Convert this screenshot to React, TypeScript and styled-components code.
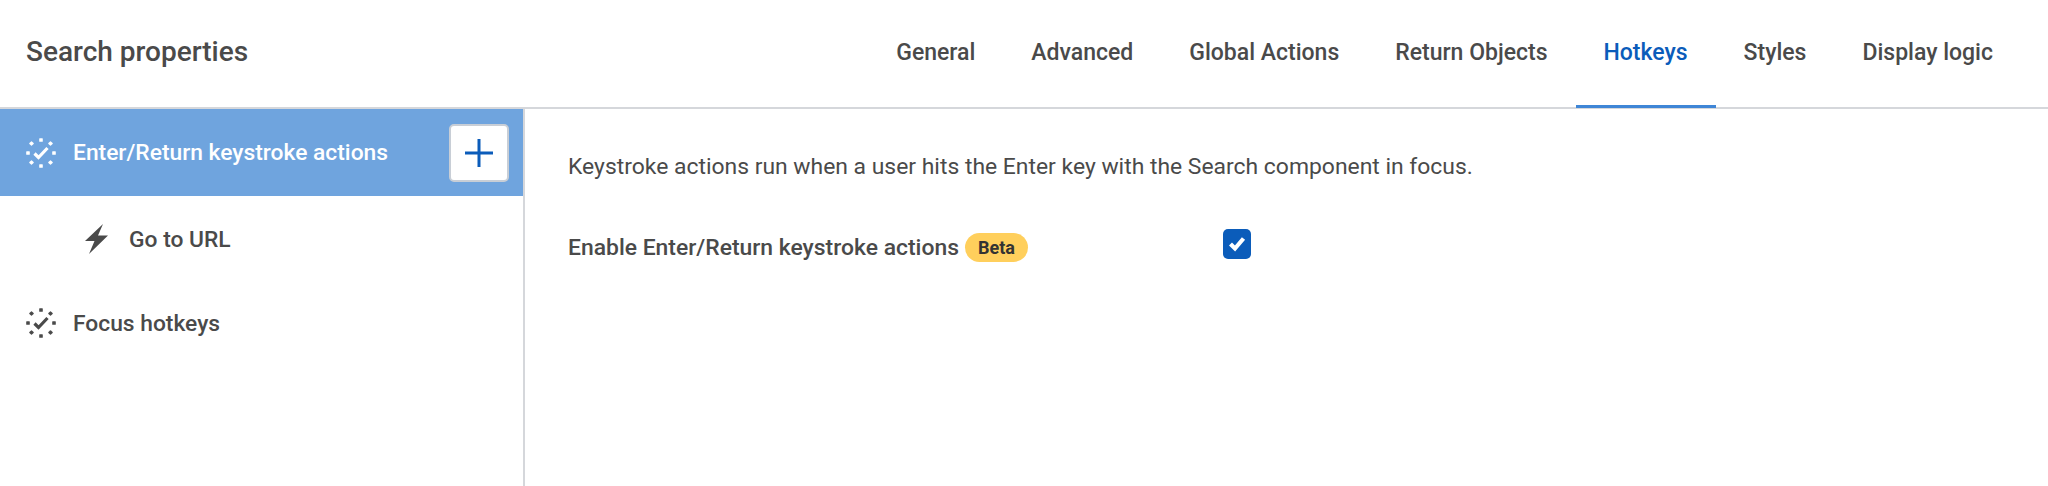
import React from "react";
import styled, { createGlobalStyle } from "styled-components";

const Global = createGlobalStyle`
  html, body { margin: 0; padding: 0; background: #fff; }
  body { font-family: Roboto, "Liberation Sans", sans-serif; color: #4a4a4a; }
`;
const Page = styled.div`
  width: 2048px;
  height: 486px;
  display: flex;
  flex-direction: column;
  overflow: hidden;
`;
const Header = styled.header`
  height: 107px;
  flex: none;
  display: flex;
  align-items: stretch;
  justify-content: space-between;
  padding: 0 0 0 26px;
  border-bottom: 2px solid #d5d7db;
`;
const Title = styled.h1`
  margin: 0;
  align-self: center;
  font-size: 28px;
  font-weight: 500;
  color: #4a4a4a;
  position: relative;
  top: -2px;
`;
const Tabs = styled.nav`
  display: flex;
  padding-right: 27px;
`;
const Tab = styled.div<{ $active?: boolean }>`
  padding: 0 28px;
  display: flex;
  align-items: center;
  padding-bottom: 4px;
  font-size: 23px;
  font-weight: 500;
  color: ${(p) => (p.$active ? "#0b5cba" : "#4a4a4a")};
  box-shadow: ${(p) => (p.$active ? "inset 0 -3px 0 #3f86d6" : "none")};
  margin-bottom: -1px;
`;
const Body = styled.div`
  flex: 1;
  display: flex;
`;
const Side = styled.aside`
  width: 523px;
  flex: none;
  border-right: 2px solid #d5d7db;
`;
const Row = styled.div<{ $active?: boolean; $child?: boolean }>`
  height: ${(p) => (p.$active ? "87px" : p.$child ? "86px" : "82px")};
  display: flex;
  align-items: center;
  padding: ${(p) => (p.$child ? "0 0 0 84px" : "0 14px 0 25px")};
  gap: ${(p) => (p.$child ? "19px" : "16px")};
  font-size: 22.8px;
  font-weight: 500;
  color: ${(p) => (p.$active ? "#fff" : "#4a4a4a")};
  background: ${(p) => (p.$active ? "#6fa4de" : "transparent")};
`;
const RowLabel = styled.span`
  flex: 1;
`;
const AddButton = styled.div`
  width: 60px;
  height: 58px;
  box-sizing: border-box;
  background: #fff;
  border: 2px solid #c8ced6;
  border-radius: 5px;
  display: flex;
  align-items: center;
  justify-content: center;
`;
const Main = styled.main`
  flex: 1;
  padding: 44px 0 0 43px;
`;
const Intro = styled.p`
  margin: 0 0 51px;
  font-size: 22.9px;
  line-height: 28px;
  color: #4a4a4a;
`;
const Setting = styled.div`
  display: flex;
  align-items: center;
  height: 30px;
`;
const SettingLabel = styled.div`
  width: 655px;
  display: flex;
  align-items: center;
  gap: 6px;
  font-size: 22.9px;
  font-weight: 500;
  color: #4a4a4a;
`;
const Badge = styled.span`
  display: inline-flex;
  align-items: center;
  height: 29px;
  padding: 0 13px;
  border-radius: 15px;
  background: #ffcf5c;
  color: #333;
  font-size: 18px;
  font-weight: 700;
`;
const Check = styled.div`
  width: 28px;
  height: 30px;
  border-radius: 5px;
  background: #0b5cba;
  display: flex;
  align-items: center;
  justify-content: center;
  position: relative;
  top: -3px;
`;

const Dotted = ({ color }: { color: string }) => (
  <svg width="32" height="32" viewBox="0 0 32 32" fill={color}>
    <rect x="14.2" y="1.2" width="3.6" height="3.6" rx="0.6" />
    <rect x="14.2" y="27.2" width="3.6" height="3.6" rx="0.6" />
    <rect x="1.2" y="14.2" width="3.6" height="3.6" rx="0.6" />
    <rect x="27.2" y="14.2" width="3.6" height="3.6" rx="0.6" />
    <rect x="4.7" y="4.7" width="3.6" height="3.6" rx="0.6" transform="rotate(45 6.5 6.5)" />
    <rect x="23.7" y="4.7" width="3.6" height="3.6" rx="0.6" transform="rotate(45 25.5 6.5)" />
    <rect x="4.7" y="23.7" width="3.6" height="3.6" rx="0.6" transform="rotate(45 6.5 25.5)" />
    <rect x="23.7" y="23.7" width="3.6" height="3.6" rx="0.6" transform="rotate(45 25.5 25.5)" />
    <path d="M9.5 16.5l4 4L22.5 11" fill="none" stroke={color} strokeWidth="3.2" />
  </svg>
);

const Bolt = () => (
  <svg width="26" height="32" viewBox="0 0 26 32" fill="#4a4a4a">
    <path d="M19 1 L1 18 L10.5 18 L5 31 L24 12.5 L14 12.5 Z" />
  </svg>
);

const tabs = ["General", "Advanced", "Global Actions", "Return Objects", "Hotkeys", "Styles", "Display logic"];

export default function App() {
  return (
    <Page>
      <Global />
      <Header>
        <Title>Search properties</Title>
        <Tabs>
          {tabs.map((t) => (
            <Tab key={t} $active={t === "Hotkeys"}>{t}</Tab>
          ))}
        </Tabs>
      </Header>
      <Body>
        <Side>
          <Row $active>
            <Dotted color="#fff" />
            <RowLabel>Enter/Return keystroke actions</RowLabel>
            <AddButton>
              <svg width="30" height="30" viewBox="0 0 30 30" stroke="#0b5cba" strokeWidth="3">
                <path d="M15 1v28M1 15h28" />
              </svg>
            </AddButton>
          </Row>
          <Row $child>
            <Bolt />
            <RowLabel>Go to URL</RowLabel>
          </Row>
          <Row>
            <Dotted color="#4a4a4a" />
            <RowLabel>Focus hotkeys</RowLabel>
          </Row>
        </Side>
        <Main>
          <Intro>Keystroke actions run when a user hits the Enter key with the Search component in focus.</Intro>
          <Setting>
            <SettingLabel>
              Enable Enter/Return keystroke actions
              <Badge>Beta</Badge>
            </SettingLabel>
            <Check>
              <svg width="18" height="16" viewBox="0 0 18 16" fill="none" stroke="#fff" strokeWidth="4.2">
                <path d="M2.5 8l4.5 4.5L15.5 2.5" />
              </svg>
            </Check>
          </Setting>
        </Main>
      </Body>
    </Page>
  );
}
